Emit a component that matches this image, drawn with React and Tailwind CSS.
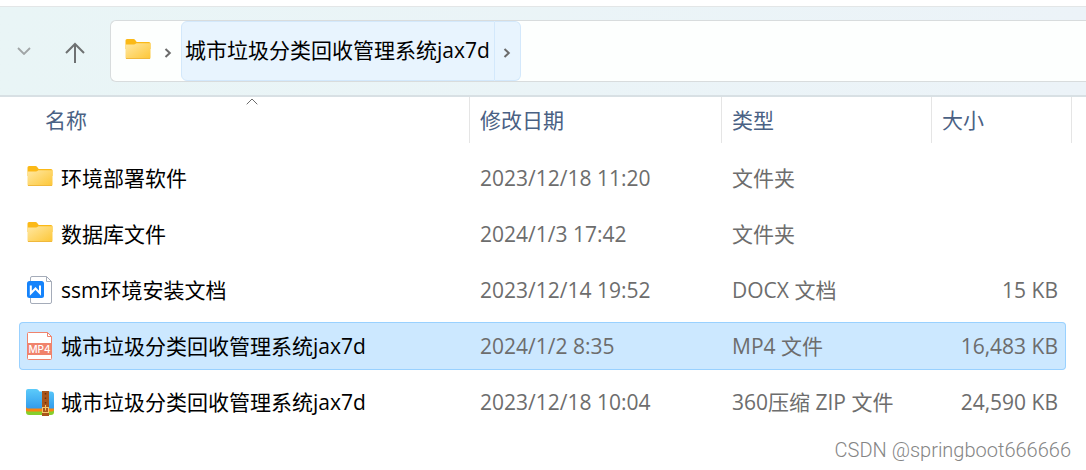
import React from 'react'
import clsx from 'clsx'

const files = [
  { name: '环境部署软件', date: '2023/12/18 11:20', type: '文件夹', size: '', icon: FolderIcon },
  { name: '数据库文件', date: '2024/1/3 17:42', type: '文件夹', size: '', icon: FolderIcon },
  { name: 'ssm环境安装文档', date: '2023/12/14 19:52', type: 'DOCX 文档', size: '15 KB', icon: DocIcon },
  { name: '城市垃圾分类回收管理系统jax7d', date: '2024/1/2 8:35', type: 'MP4 文件', size: '16,483 KB', icon: Mp4Icon, selected: true },
  { name: '城市垃圾分类回收管理系统jax7d', date: '2023/12/18 10:04', type: '360压缩 ZIP 文件', size: '24,590 KB', icon: ZipIcon },
]

function FolderIcon() {
  return (
    <svg width="28" height="28" viewBox="0 0 28 28" className="shrink-0" aria-hidden="true">
      <defs>
        <linearGradient id="folderFront" x1="0" y1="0" x2="1" y2="1">
          <stop offset="0" stopColor="#ffe8a3" />
          <stop offset="1" stopColor="#fdc635" />
        </linearGradient>
      </defs>
      <path d="M1.500 3.500Q1.500 2 3 2h6.500q1 0 1.700.9L12.700 5H25q1.500 0 1.500 1.500V12h-25z" fill="#fbb917" />
      <path d="M1.500 7.500H10q1 0 1.700-.7l.6-.6H26.500V20.500q0 1.500-1.500 1.500H3q-1.500 0-1.500-1.500z" fill="url(#folderFront)" />
      <path d="M2 21.500H26" stroke="#f0b83c" strokeWidth="1" />
    </svg>
  )
}

function DocIcon() {
  return (
    <svg width="28" height="28" viewBox="0 0 28 28" className="shrink-0" aria-hidden="true">
      <path d="M6 .5H20.500L25.500 5.500V26q0 1.500-1.500 1.500H6q-1.500 0-1.500-1.500V2Q4.500.5 6 .5z" fill="#fff" stroke="#a5acb9" />
      <path d="M20.500.5V5.500H25.500" fill="none" stroke="#a5acb9" />
      <rect x="1" y="5" width="17" height="17" rx="2.500" fill="#1583fb" />
      <path d="M4.800 9.500V17.300L9.500 12.500L14 17.300V9.500" fill="none" stroke="#fff" strokeWidth="2" />
    </svg>
  )
}

function Mp4Icon() {
  return (
    <svg width="28" height="28" viewBox="0 0 28 28" className="shrink-0" aria-hidden="true">
      <path d="M2.500.5H21.500L25.500 4.500V26.500q0 1-1 1H2.500q-1 0-1-1V1.500q0-1 1-1z" fill="#fff" stroke="#f0836c" />
      <path d="M21.500.5V4.500H25.500" fill="none" stroke="#f0836c" />
      <rect x="1" y="11" width="25" height="12" fill="#f0836c" />
      <text x="13.500" y="20.500" textAnchor="middle" fontSize="10" fontWeight="500" fill="#fff" fontFamily="Inter, sans-serif">MP4</text>
    </svg>
  )
}

function ZipIcon() {
  return (
    <svg width="28" height="28" viewBox="0 0 28 28" className="shrink-0" aria-hidden="true">
      <defs>
        <linearGradient id="zipFront" x1="0" y1="0" x2="0" y2="1">
          <stop offset="0" stopColor="#5ccbfa" />
          <stop offset="1" stopColor="#329cec" />
        </linearGradient>
      </defs>
      <path d="M0 18H28V24q0 3-3 3H3q-3 0-3-3z" fill="#86cf2c" />
      <path d="M0 16H28V21.500q0 2-2 2H2q-2 0-2-1z" fill="#fb8412" />
      <path d="M0 3Q0 1 2 1h8q1.500 0 2.300 1l1.200 1.500H25q3 0 3 3V20.500H2q-2 0-2-2z" fill="url(#zipFront)" />
      <rect x="16" y="3" width="7" height="25" fill="#a8551b" />
      <path d="M19.500 5V17" stroke="#6d3009" strokeWidth="1.500" strokeDasharray="1.500 3" />
      <rect x="16.500" y="19.500" width="6" height="5" fill="none" stroke="#f7c66a" />
      <path d="M19.500 17V22.500" stroke="#f7c66a" />
    </svg>
  )
}

function Chevron({ className }) {
  return (
    <svg width="8" height="12" viewBox="0 0 8 12" className={className} aria-hidden="true">
      <path d="M1.500 2L5.800 6L1.500 10" fill="none" stroke="#6b6b6b" strokeWidth="2" />
    </svg>
  )
}

function Toolbar() {
  return (
    <header className="flex items-center border-t border-b-2 border-t-[#e3e6e7] border-b-[#d8e0e4] bg-linear-to-r from-[#e9f5f6] to-[#ecf3f8] py-[13px]">
      <button type="button" aria-label="Recent locations" className="ml-4 flex h-8 w-4 items-center justify-center">
        <svg width="14" height="8" viewBox="0 0 14 8" aria-hidden="true">
          <path d="M1 1L7 7L13 1" fill="none" stroke="#a0a5a6" strokeWidth="1.800" />
        </svg>
      </button>
      <button type="button" aria-label="Up" className="ml-8 flex h-8 w-[22px] items-center justify-center">
        <svg width="20" height="22" viewBox="0 0 20 22" className="mt-1 shrink-0" aria-hidden="true">
          <path d="M10 21V2M1 11L10 2L19 11" fill="none" stroke="#6e7172" strokeWidth="2" />
        </svg>
      </button>
      <nav aria-label="Address" className="ml-6 flex h-[62px] flex-1 items-center rounded-l-md border border-r-0 border-[#d8dcdd] bg-[#fdfffe]">
        <div className="pl-[13px]">
          <FolderIcon />
        </div>
        <Chevron className="mt-1 ml-3" />
        <button type="button" className="ml-[9px] h-[60px] rounded-l-md border border-[#d3e8fb] bg-[#e8f4fe] pr-1 pb-[3px] pl-[3px] text-black">
          城市垃圾分类回收管理系统jax7d
        </button>
        <button type="button" aria-label="Show subfolders" className="flex h-[60px] w-[26px] items-center justify-center rounded-r-md border border-l-0 border-[#d3e8fb] bg-[#e8f4fe]">
          <Chevron className="mt-1" />
        </button>
      </nav>
    </header>
  )
}

function HeaderCell({ label }) {
  return (
    <button type="button" className="flex h-[46px] w-full items-center border-r border-[#e5e5e5] pl-[10px]">
      {label}
    </button>
  )
}

function FileRow({ file }) {
  const Icon = file.icon
  const cell = clsx('flex h-12 items-center border-y', file.selected ? 'border-[#99d1ff] bg-[#cce8ff]' : 'border-transparent')

  return (
    <tr className="text-[#6d6d6d]" aria-selected={!!file.selected}>
      <td className="h-14">
        <div className={clsx(cell, 'gap-[7px] rounded-l-sm border-l pl-[6px] text-black')}>
          <Icon />
          {file.name}
        </div>
      </td>
      <td>
        <div className={clsx(cell, 'pl-[10px]')}>{file.date}</div>
      </td>
      <td>
        <div className={clsx(cell, 'pl-[10px]')}>{file.type}</div>
      </td>
      <td>
        <div className={clsx(cell, 'justify-end rounded-r-sm border-r pr-[7px]')}>{file.size}</div>
      </td>
      <td></td>
    </tr>
  )
}

export default function App() {
  return (
    <div className="bg-white pt-[6px] font-['Open_Sans','Noto_Sans_CJK_SC',sans-serif] text-[21px] leading-7 font-[399]">
      <Toolbar />

      <main className="pr-[14px] pl-[19px]">
        <table className="w-full table-fixed">
          <colgroup>
            <col />
            <col className="w-[252px]" />
            <col className="w-[210px]" />
            <col className="w-[134px]" />
            <col className="w-[6px]" />
          </colgroup>
          <thead>
            <tr className="text-[#4a6184]">
              <th className="pb-[7px] font-[399]" aria-sort="ascending">
                <div className="border-r border-[#e5e5e5] pl-4">
                  <button type="button" className="relative flex h-[46px] w-full items-center pl-[10px]">
                    {/* Sort direction */}
                    <svg width="12" height="7" viewBox="0 0 12 7" className="absolute top-px left-1/2 -translate-x-1/2" aria-hidden="true">
                      <path d="M.7 6.300L6 1L11.300 6.300" fill="none" stroke="#6b6b6b" />
                    </svg>
                    名称
                  </button>
                </div>
              </th>
              <th className="pb-[7px] font-[399]"><HeaderCell label="修改日期" /></th>
              <th className="pb-[7px] font-[399]"><HeaderCell label="类型" /></th>
              <th className="pb-[7px] font-[399]" colSpan={2}><HeaderCell label="大小" /></th>
            </tr>
          </thead>
          <tbody>
            {files.map((file, i) => (
              <FileRow key={i} file={file} />
            ))}
          </tbody>
        </table>
      </main>

      <footer className="flex h-10 items-center justify-end pr-[15px] font-[Roboto,sans-serif] text-[20px] font-light text-[#858585]">
        CSDN @springboot666666
      </footer>
    </div>
  )
}
